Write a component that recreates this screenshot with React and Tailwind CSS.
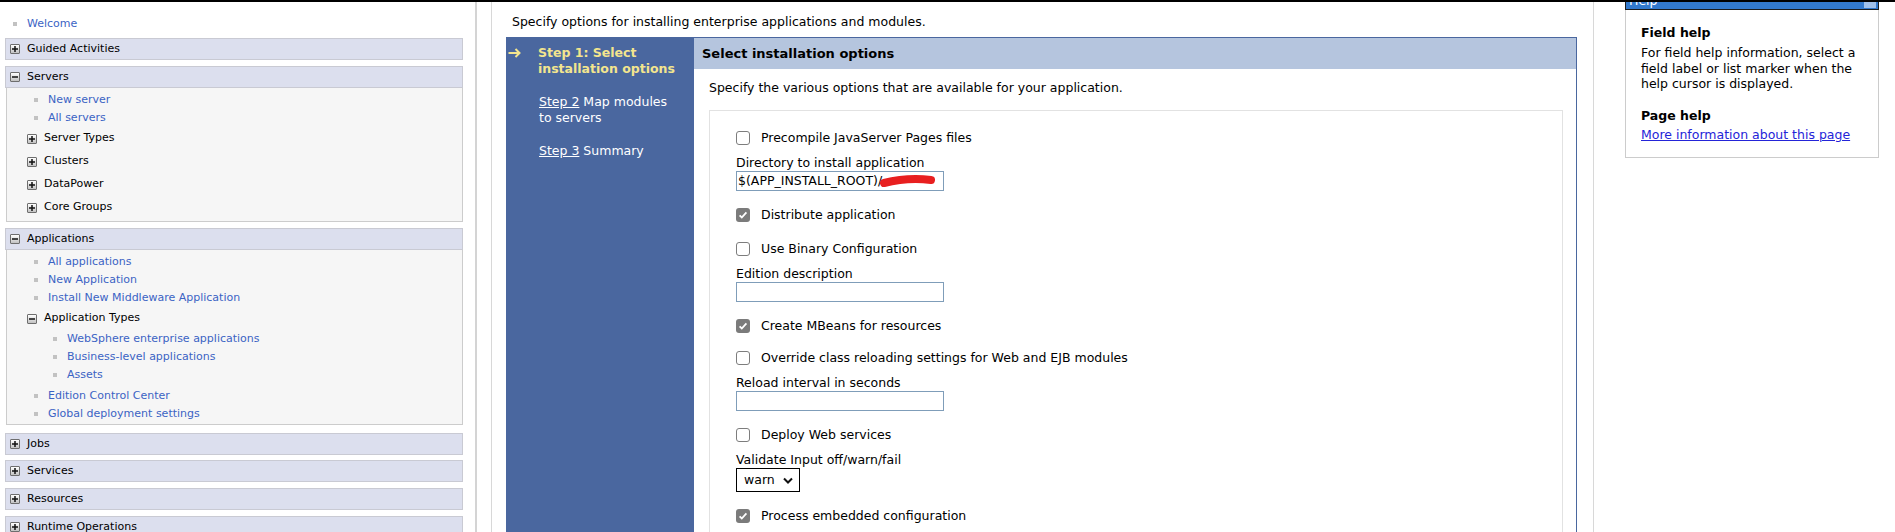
import React from 'react';

function Toggle({ open }) {
  return (
    <span className="flex h-[10px] w-[10px] shrink-0 items-center justify-center rounded-[1px] border border-[#6e6e6e] bg-linear-to-b from-white to-[#c2c2c2]">
      <svg width="8" height="8" viewBox="0 0 8 8">
        <path d={open ? 'M1 4h6' : 'M1 4h6M4 1v6'} stroke="#111" strokeWidth="1.5" />
      </svg>
    </span>
  );
}

function Bullet() {
  return <span className="h-[4px] w-[4px] shrink-0 bg-[#c2c2c2]" />;
}

function NavLink({ children, indent = 'pl-[27px]' }) {
  return (
    <div className={`flex h-[18px] items-center gap-[10px] ${indent}`}>
      <Bullet />
      <span className="text-[#3b63c4]">{children}</span>
    </div>
  );
}

function NavNode({ label, open }) {
  return (
    <div className="flex h-[23px] items-center gap-[7px] pl-[20px]">
      <Toggle open={open} />
      <span>{label}</span>
    </div>
  );
}

function SectionHeader({ label, open, className = '' }) {
  return (
    <div className={`flex h-[22px] items-center gap-[7px] border border-[#c9cad3] bg-[#dcdfee] pl-[4px] ${className}`}>
      <Toggle open={open} />
      <span>{label}</span>
    </div>
  );
}

function Check({ checked }) {
  return checked ? (
    <span className="flex h-[14px] w-[14px] shrink-0 items-center justify-center rounded-[3px] bg-[#7b7b7b]">
      <svg width="10" height="10" viewBox="0 0 10 10">
        <path d="M1.6 5.3l2.2 2.2 4.6-5.2" fill="none" stroke="white" strokeWidth="1.8" />
      </svg>
    </span>
  ) : (
    <span className="h-[14px] w-[14px] shrink-0 rounded-[3px] border border-[#7d7d7d] bg-white" />
  );
}

function CheckRow({ label, checked, className = '' }) {
  return (
    <div className={`flex h-[20px] items-center gap-[11px] ${className}`}>
      <Check checked={checked} />
      <span>{label}</span>
    </div>
  );
}

function Field({ label, children }) {
  return (
    <div className="mt-[7px]">
      <div className="leading-[16px]">{label}</div>
      <div className="flex h-[20px] w-[208px] items-center overflow-hidden border border-[#7f9db9] bg-white pl-[1px]">{children}</div>
    </div>
  );
}

function Nav() {
  return (
    <div className="w-[477px] shrink-0 border-r-2 border-[#d4d4d4] pl-[5px] pr-[12px] text-[11px]">
      <div className="mt-[13px] flex h-[18px] items-center gap-[10px] pl-[8px]">
        <Bullet />
        <span className="text-[#3b63c4]">Welcome</span>
      </div>
      <SectionHeader label="Guided Activities" className="mt-[5px]" />
      <SectionHeader label="Servers" open className="mt-[6px]" />
      <div className="ml-[1px] border-x border-b border-[#cccccc] bg-[#f6f6f6] pb-[2px] pt-[3px]">
        <NavLink>New server</NavLink>
        <NavLink>All servers</NavLink>
        <NavNode label="Server Types" />
        <NavNode label="Clusters" />
        <NavNode label="DataPower" />
        <NavNode label="Core Groups" />
      </div>
      <SectionHeader label="Applications" open className="mt-[6px]" />
      <div className="ml-[1px] border-x border-b border-[#cccccc] bg-[#f6f6f6] pb-[1px] pt-[3px]">
        <NavLink>All applications</NavLink>
        <NavLink>New Application</NavLink>
        <NavLink>Install New Middleware Application</NavLink>
        <NavNode label="Application Types" open />
        <NavLink indent="pl-[46px]">WebSphere enterprise applications</NavLink>
        <NavLink indent="pl-[46px]">Business-level applications</NavLink>
        <NavLink indent="pl-[46px]">Assets</NavLink>
        <div className="mt-[3px]">
          <NavLink>Edition Control Center</NavLink>
          <NavLink>Global deployment settings</NavLink>
        </div>
      </div>
      <SectionHeader label="Jobs" className="mt-[8px]" />
      <SectionHeader label="Services" className="mt-[5px]" />
      <SectionHeader label="Resources" className="mt-[6px]" />
      <SectionHeader label="Runtime Operations" className="mt-[6px]" />
    </div>
  );
}

function Wizard() {
  return (
    <div className="ml-[14px] mt-[7px] flex w-[1071px] border border-[#4a679f]">
      <div className="w-[187px] shrink-0 bg-[#4a679f] pt-[7px] text-[12.5px] leading-[16px] text-white">
        <div className="flex">
          <span className="flex h-[16px] w-[31px] items-center pl-[1px]">
            <svg width="13" height="10" viewBox="0 0 13 10">
              <path d="M0.5 5h11M7.5 1l4 4-4 4" fill="none" stroke="#f3e58e" strokeWidth="2" />
            </svg>
          </span>
          <span className="font-bold text-[#f3e58e]">
            Step 1: Select
            <br />
            installation options
          </span>
        </div>
        <div className="mt-[17px] pl-[32px]">
          <span className="underline">Step 2</span> Map modules
          <br />
          to servers
        </div>
        <div className="mt-[17px] pl-[32px]">
          <span className="underline">Step 3</span> Summary
        </div>
      </div>
      <div className="flex-1 bg-white text-[12.5px]">
        <div className="flex h-[31px] items-center bg-[#b5c5de] pl-[8px] text-[13px] font-bold">
          Select installation options
        </div>
        <div className="pl-[15px] pr-[13px]">
          <div className="mt-[11px] leading-[16px]">
            Specify the various options that are available for your application.
          </div>
          <div className="mt-[14px] border border-[#e2e2e2] pb-[40px] pl-[26px] pt-[17px]">
            <CheckRow label="Precompile JavaServer Pages files" />
            <Field label="Directory to install application">
              <span>$(APP_INSTALL_ROOT)/</span>
              <svg width="56" height="16" viewBox="0 0 56 16" className="-ml-[2px] shrink-0">
                <path d="M4 10C16 7 34 5 51 7" fill="none" stroke="#e81f1f" strokeWidth="8" strokeLinecap="round" />
              </svg>
            </Field>
            <CheckRow label="Distribute application" checked className="mt-[14px]" />
            <CheckRow label="Use Binary Configuration" className="mt-[14px]" />
            <Field label="Edition description" />
            <CheckRow label="Create MBeans for resources" checked className="mt-[14px]" />
            <CheckRow label="Override class reloading settings for Web and EJB modules" className="mt-[12px]" />
            <Field label="Reload interval in seconds" />
            <CheckRow label="Deploy Web services" className="mt-[14px]" />
            <div className="mt-[7px]">
              <div className="leading-[16px]">Validate Input off/warn/fail</div>
              <div className="flex h-[24px] w-[64px] items-center justify-between border border-black bg-white pl-[7px] pr-[6px]">
                <span>warn</span>
                <svg width="10" height="7" viewBox="0 0 10 7">
                  <path d="M1 1.5l4 4 4-4" fill="none" stroke="#111" strokeWidth="2" />
                </svg>
              </div>
            </div>
            <CheckRow label="Process embedded configuration" checked className="mt-[14px]" />
          </div>
        </div>
      </div>
    </div>
  );
}

function HelpPanel() {
  return (
    <div className="ml-[31px] w-[254px] shrink-0 self-start text-[12.5px]">
      <div className="relative h-[8px] overflow-hidden border-x border-b border-[#1b1b1b] bg-[#3279cd]">
        <div className="-mt-[8px] pl-[3px] leading-[14px] text-white">Help</div>
        <span className="absolute right-[2px] top-0 h-[6px] w-[12px] bg-[#9fc0ea]" />
      </div>
      <div className="border-x border-b border-[#cccccc] px-[15px] pb-[14px] pt-[15px] leading-[16px]">
        <div className="font-bold">Field help</div>
        <div className="mt-[4px] leading-[15.5px]">
          For field help information, select a
          <br />
          field label or list marker when the
          <br />
          help cursor is displayed.
        </div>
        <div className="mt-[16px] font-bold">Page help</div>
        <div className="mt-[3px] text-[#2424d8] underline">More information about this page</div>
      </div>
    </div>
  );
}

export default function App() {
  return (
    <div className="h-[532px] overflow-hidden bg-white font-['DejaVu_Sans',sans-serif] text-black">
      <div className="h-[2px] bg-black" />
      <div className="flex">
        <Nav />
        <div className="ml-[14px] h-[530px] w-[1103px] shrink-0 border-x border-[#d8d8d8]">
          <div className="mt-[12px] pl-[20px] text-[12.5px] leading-[16px]">
            Specify options for installing enterprise applications and modules.
          </div>
          <Wizard />
        </div>
        <HelpPanel />
      </div>
    </div>
  );
}
